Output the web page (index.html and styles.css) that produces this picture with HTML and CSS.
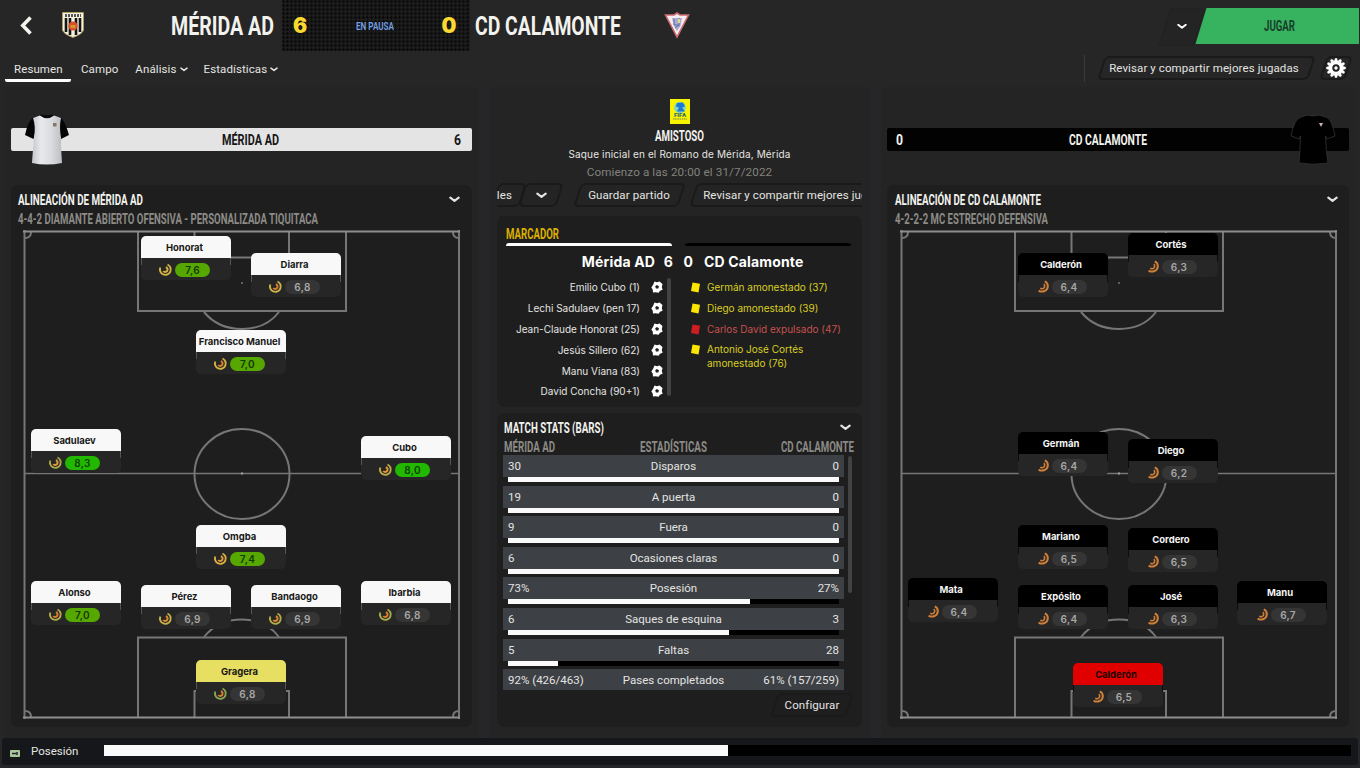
FILE: index.html
```html
<!DOCTYPE html>
<html lang="es">
<head>
<meta charset="utf-8">
<title>Mérida AD 6 - 0 CD Calamonte</title>
<link rel="stylesheet" href="styles.css">
</head>
<body>
<svg class="defs" width="0" height="0">
  <symbol id="chev" viewBox="0 0 10 6"><path d="M1.200 1.300 5 4.200 8.800 1.300" fill="none" stroke="currentColor" stroke-width="1.900" stroke-linecap="round" stroke-linejoin="round"/></symbol>
  <symbol id="pitch" viewBox="0 0 438 490">
    <g fill="none" stroke="#767676" stroke-width="2">
      <path d="M1.500 0V489M436 0V489"/>
      <path d="M115 2V81H323V2"/>
      <path d="M171.500 2V27.500H266V2"/>
      <path d="M181 82Q195 99 219 99T256 82" />
      <ellipse cx="219" cy="244" rx="47.500" ry="45"/>
      <path d="M1 243.500H437" stroke-width="1.500"/>
      <path d="M115 487V407.500H323V487"/>
      <path d="M171.500 487V461H266V487"/>
      <path d="M181 407Q195 389.500 219 389.500T256 407"/>
      <path d="M8 2Q8 8 2 8M430 2Q430 8 436 8M8 487Q8 481 2 481M430 487Q430 481 436 481"/>
    </g>
    <path d="M0 1.500H437M0 487.500H437" stroke="#8e8e8e" stroke-width="2"/>
    <circle cx="219" cy="53" r="1" fill="#767676"/><circle cx="219" cy="434" r="1" fill="#767676"/><circle cx="219" cy="243.500" r="1.200" fill="#999"/>
  </symbol>
  <symbol id="ball" viewBox="0 0 12 12"><path d="M3.500.600 6 1.200 8.600.600 11.500 3 10.800 6 11.600 8.700 9 9.700 7.600 11.800 4.500 11.200 2 11.500 1.700 8.500.300 6.500 2 4Z" fill="#fff"/><path d="M5.800 3.900 8 5.300 7.300 7.500H4.900L4.200 5.300Z" fill="#222"/></symbol>
  <symbol id="card" viewBox="0 0 11 11"><path d="M2.500.500 10 1.800 8.500 10.500 1 9Z" fill="currentColor"/></symbol>
</svg>

<header class="top">
  <svg class="back" width="12" height="19"><path d="M10.500 1.500 2.800 9.500 10.500 17.500" fill="none" stroke="#f4f4ee" stroke-width="3.600"/></svg>
  <svg class="crest" width="22" height="26" viewBox="0 0 22 26">
    <path d="M.500.500h21V18q-1 4-10.500 7.500Q1.500 22 .500 18Z" fill="#f4f0df" stroke="#a89a60"/>
    <path d="M4 6v14M8 6v17M14 6v17M18 6v14" stroke="#141414" stroke-width="2.600"/>
    <path d="M3 3.500h16" stroke="#555" stroke-width="3" stroke-dasharray="2 1"/>
    <circle cx="11" cy="14" r="4.600" fill="#de4a2c"/><path d="M8.500 14.500h5" stroke="#c99a28" stroke-width="3"/>
  </svg>
  <svg class="cond home-title" width="103" height="50"><text x="0" y="35" textLength="103" lengthAdjust="spacingAndGlyphs">MÉRIDA AD</text></svg>
  <div class="score">
    <span class="digit">6</span>
    <svg class="cond status" width="38" height="14"><text x="0" y="11" textLength="38" lengthAdjust="spacingAndGlyphs">EN PAUSA</text></svg>
    <span class="digit">0</span>
  </div>
  <svg class="cond away-title" width="146" height="50"><text x="0" y="35" textLength="146" lengthAdjust="spacingAndGlyphs">CD CALAMONTE</text></svg>
  <svg class="crest2" width="26" height="27" viewBox="0 0 26 27">
    <path d="M1.500 3H10L13 1l3 2h8.500L13 25Z" fill="#f3edf0" stroke="#c8696f" stroke-width="1.600"/>
    <path d="M8 6h10l-1.500 8-3.500 5-3-5Z" fill="#a9acd0"/><path d="M10 7v6h4M15 6v8M11 16l4-3" stroke="#5f6aa8" fill="none"/><path d="M14 7h2v4h-2z" fill="#e3d98a"/>
  </svg>
  <div class="play">
    <svg width="201" height="38">
      <path d="M13 1H47L35 37H1Z" fill="#242424" stroke="#202020"/>
      <path d="M48.500 0H201V36H37.500Z" fill="#37b25f"/>
      <use href="#chev" x="19" y="15.500" width="10" height="6"/>
      <text class="play-label" x="106" y="23" textLength="31" lengthAdjust="spacingAndGlyphs">JUGAR</text>
    </svg>
  </div>
</header>

<nav class="tabs">
  <a class="tab active">Resumen</a><a class="tab">Campo</a>
  <a class="tab">Análisis<svg width="8" height="5"><use href="#chev"/></svg></a>
  <a class="tab">Estadísticas<svg width="8" height="5"><use href="#chev"/></svg></a>
  <div class="tools">
    <span class="slant review"><b>Revisar y compartir mejores jugadas</b></span>
    <span class="slant gear"><svg width="20" height="20" viewBox="-10 -10 20 20"><g fill="#fff"><circle r="7.500"/><g id="tooth"><path d="M-1.800-7-1-9.800H1L1.800-7ZM-1.800 7-1 9.800H1L1.800 7Z"/></g><use href="#tooth" transform="rotate(30)"/><use href="#tooth" transform="rotate(60)"/><use href="#tooth" transform="rotate(90)"/><use href="#tooth" transform="rotate(120)"/><use href="#tooth" transform="rotate(150)"/></g><circle r="2.700" fill="#fff" stroke="#222" stroke-width="2"/></svg></span>
  </div>
</nav>

<main class="cols">
  <section class="side home">
    <div class="teambar">
      <svg class="shirt" width="46" height="52" viewBox="0 0 46 52">
        <defs><linearGradient id="cloth"><stop offset="0" stop-color="#c4c6ca"/><stop offset=".3" stop-color="#e8e9ec"/><stop offset=".65" stop-color="#dadbdf"/><stop offset="1" stop-color="#bcbec2"/></linearGradient></defs>
        <path d="M10 3Q4 6 1 21L9.500 25 14 8ZM36 3Q41 7 45 21L37 25 32 8Z" fill="#050505"/>
        <path d="M9 4 16 1.500Q23 5 30 1.500L37 4Q35 12 37 24 37 38 38 49 23 52 8 49 9 34 10 24 12 12 9 4Z" fill="url(#cloth)"/>
        <path d="M16 1.500Q23 7 30 1.500L28 .500Q23 2 17 .500Z" fill="#0a0a0a"/><path d="M29 9h3.500v3.500h-3.500z" fill="#8b7565"/>
      </svg>
      <svg class="cond name" width="57" height="23"><text x="0" y="17" textLength="57" lengthAdjust="spacingAndGlyphs">MÉRIDA AD</text></svg>
      <svg class="cond goals" width="7" height="23"><text x="0" y="17" textLength="7" lengthAdjust="spacingAndGlyphs">6</text></svg>
    </div>
    <article class="panel lineup">
      <div class="head"><svg class="cond" width="125" height="20"><text x="0" y="15" textLength="125" lengthAdjust="spacingAndGlyphs">ALINEACIÓN DE MÉRIDA AD</text></svg><svg class="chev" width="11" height="7"><use href="#chev"/></svg></div>
      <svg class="cond muted" width="300" height="19"><text x="0" y="14" textLength="300" lengthAdjust="spacingAndGlyphs">4-4-2 DIAMANTE ABIERTO OFENSIVA - PERSONALIZADA TIQUITACA</text></svg>
      <div class="field" id="home-field"><svg width="438" height="490"><use href="#pitch"/></svg></div>
    </article>
  </section>

  <section class="centre">
    <svg class="comp" width="20" height="25" viewBox="0 0 20 25">
      <rect width="20" height="25" fill="#f8f400"/><circle cx="10" cy="8.500" r="5.800" fill="#7fd0c8"/><path d="M7 4l6-.500 2 4-3 1 3 4H7l2-4-3-1Z" fill="#1779d4"/>
      <text x="4" y="18" textLength="12" lengthAdjust="spacingAndGlyphs">FIFA</text><path d="M3 20h14" stroke="#b5b834" stroke-width="2" stroke-dasharray="1.500 .700"/>
    </svg>
    <svg class="cond amistoso" width="49" height="20"><text x="0" y="15" textLength="49" lengthAdjust="spacingAndGlyphs">AMISTOSO</text></svg>
    <p class="venue">Saque inicial en el Romano de Mérida, Mérida</p>
    <p class="kick">Comienzo a las 20:00 el 31/7/2022</p>
    <div class="actions">
      <span class="slant les"><b>les</b></span><span class="slant drop"><svg width="11" height="7"><use href="#chev"/></svg></span>
      <span class="slant save"><b>Guardar partido</b></span>
      <span class="slant share"><b>Revisar y compartir mejores jugadas</b></span>
    </div>

    <article class="panel board">
      <svg class="cond gold" width="53" height="18"><text x="0" y="14" textLength="53" lengthAdjust="spacingAndGlyphs">MARCADOR</text></svg>
      <div class="caps"><i class="white"></i><i></i></div>
      <div class="result"><span>Mérida AD</span><span>6</span><span>0</span><span>CD Calamonte</span></div>
      <div class="events">
        <ul class="goals-list">
          <li>Emilio Cubo (1)<svg width="12" height="12"><use href="#ball"/></svg></li>
          <li>Lechi Sadulaev (pen 17)<svg width="12" height="12"><use href="#ball"/></svg></li>
          <li>Jean-Claude Honorat (25)<svg width="12" height="12"><use href="#ball"/></svg></li>
          <li>Jesús Sillero (62)<svg width="12" height="12"><use href="#ball"/></svg></li>
          <li>Manu Viana (83)<svg width="12" height="12"><use href="#ball"/></svg></li>
          <li>David Concha (90+1)<svg width="12" height="12"><use href="#ball"/></svg></li>
        </ul>
        <i class="scroll"></i>
        <ul class="cards-list">
          <li><svg width="11" height="11"><use href="#card"/></svg><span>Germán amonestado (37)</span></li>
          <li><svg width="11" height="11"><use href="#card"/></svg><span>Diego amonestado (39)</span></li>
          <li class="red"><svg width="11" height="11"><use href="#card"/></svg><span>Carlos David expulsado (47)</span></li>
          <li><svg width="11" height="11"><use href="#card"/></svg><span>Antonio José Cortés<br>amonestado (76)</span></li>
        </ul>
      </div>
    </article>

    <article class="panel stats">
      <div class="head"><svg class="cond" width="100" height="20"><text x="0" y="15" textLength="100" lengthAdjust="spacingAndGlyphs">MATCH STATS (BARS)</text></svg><svg class="chev" width="11" height="7"><use href="#chev"/></svg></div>
      <div class="thead">
        <svg class="cond muted" width="51" height="20"><text x="0" y="14.500" textLength="51" lengthAdjust="spacingAndGlyphs">MÉRIDA AD</text></svg>
        <svg class="cond muted mid" width="67" height="20"><text x="0" y="14.500" textLength="67" lengthAdjust="spacingAndGlyphs">ESTADÍSTICAS</text></svg>
        <svg class="cond muted" width="73" height="20"><text x="0" y="14.500" textLength="73" lengthAdjust="spacingAndGlyphs">CD CALAMONTE</text></svg>
      </div>
      <div class="tbody"><div class="rows" id="rows"></div><i class="scroll"></i></div>
      <div class="foot"><span class="slant config"><b>Configurar</b></span></div>
    </article>
  </section>

  <section class="side away">
    <div class="teambar">
      <svg class="cond goals" width="7" height="23"><text x="0" y="17" textLength="7" lengthAdjust="spacingAndGlyphs">0</text></svg>
      <svg class="cond name" width="78" height="23"><text x="0" y="17" textLength="78" lengthAdjust="spacingAndGlyphs">CD CALAMONTE</text></svg>
      <svg class="shirt" width="46" height="52" viewBox="0 0 46 52">
        <path d="M10 3.500 17 1Q23 3 29 1L37 3.500Q42 6 45 22L37 25 35.500 22Q36 38 38 49 23 51.500 9 49 10 38 10.500 22L9 25 1 22Q4 6 10 3.500Z" fill="#000" stroke="#333" stroke-width=".8"/>
        <path d="M29 9h4l-2 4Z" fill="#c9b4bc"/>
      </svg>
    </div>
    <article class="panel lineup">
      <div class="head"><svg class="cond" width="146" height="20"><text x="0" y="15" textLength="146" lengthAdjust="spacingAndGlyphs">ALINEACIÓN DE CD CALAMONTE</text></svg><svg class="chev" width="11" height="7"><use href="#chev"/></svg></div>
      <svg class="cond muted" width="153" height="19"><text x="0" y="14" textLength="153" lengthAdjust="spacingAndGlyphs">4-2-2-2 MC ESTRECHO DEFENSIVA</text></svg>
      <div class="field" id="away-field"><svg width="438" height="490"><use href="#pitch"/></svg></div>
    </article>
  </section>
</main>

<footer class="possession">
  <svg width="10" height="7"><rect width="10" height="7" rx="1" fill="#a9c79a"/><path d="M2 3.500h4M7 2v3" stroke="#223" stroke-width="1.600"/></svg>
  <span>Posesión</span>
  <div class="track"><i></i></div>
</footer>
<script src="app.js"></script>
</body>
</html>
```
FILE: styles.css
```css
* { box-sizing: border-box; }
body { margin: 0; width: 1360px; height: 768px; overflow: hidden; background: #262628; color: #e4e4e2; font: 11.500px/16px Roboto, sans-serif; display: flex; flex-direction: column; }
svg { display: block; flex: none; overflow: visible; }
p, ul { margin: 0; padding: 0; list-style: none; }
b { font-weight: 400; }
.defs { position: absolute; }
.cond { font: 700 14px Roboto, sans-serif; fill: #f2f2ee; }
.muted { fill: #8c8b86; }

.top { display: flex; height: 52px; background: #262626; }
.back { margin: 16px 0 0 20px; }
.crest { margin: 12px 0 0 30px; }
.home-title, .away-title { font-size: 25.500px; font-weight: 700; }
.home-title { margin-left: 87px; }
.score { display: flex; justify-content: space-between; align-items: center; width: 188px; height: 51px; margin-left: 8px; padding: 0 13px 0 10px; background: radial-gradient(circle at 1.500px 1.500px, #0a0a0a 1px, transparent 1.300px) 0 0 / 4px 4px, #1b1b1b; }
.digit { width: 16px; text-align: center; font: 900 21px/50px Inter, sans-serif; color: #fbd930; }
.status { font-size: 11.500px; font-weight: 600; fill: #71a0e6; margin-left: 22px; }
.score .digit:last-child { margin-left: 22px; }
.away-title { margin-left: 5px; }
.crest2 { margin: 12px 0 0 43px; }
.play { margin: 8px 0 0 auto; color: #fff; }
.play svg { margin-right: 1px; }
.play-label { font: 700 14px Roboto, sans-serif; fill: #16402a; }

.tabs { display: flex; height: 35px; background: #262626; padding-left: 5px; }
.tab { display: flex; align-items: center; gap: 3px; height: 30px; padding: 4px 8px 0; letter-spacing: .1px; white-space: nowrap; }
.tab.active { width: 66px; padding: 7px 0 0 9px; border-bottom: 3px solid #fff; border-radius: 2px; }
.active + .tab { padding-left: 10px; padding-right: 9px; }
.tools { display: flex; gap: 3px; margin: 3px 7px 0 auto; padding-left: 12px; border-left: 1px solid #3a3a3a; height: 27px; }
.slant { position: relative; flex: none; display: flex; align-items: center; justify-content: center; height: 24px; white-space: nowrap; letter-spacing: .1px; z-index: 0; }
.slant::before { content: ""; position: absolute; inset: 0 4px; border: 2px solid #1a1a1a; border-radius: 5px; transform: skewX(-18deg); z-index: -1; }
.review { width: 219px; margin-top: 1px; padding-right: 5px; }
.gear { width: 34px; margin-top: 1px; }

.cols { display: flex; height: 651px; padding: 0 4px; gap: 11px; }
.side, .centre { background: #242424; }
.side { width: 475px; padding: 41px 7px 0; }
.side.away { padding-left: 6px; padding-right: 7px; }
.centre { width: 381px; padding: 12px 8px 0; margin-left: -1px; display: flex; flex-direction: column; align-items: center; }
.teambar { position: relative; height: 23px; width: 461px; border-radius: 2px; display: flex; background: #e4e4e4; }
.home .cond.name { margin-left: 211px; }
.home .teambar .cond { fill: #171717; }
.home .goals { margin-left: auto; margin-right: 11px; }
.away .teambar { background: #020202; width: 462px; }
.away .goals { margin-left: 9px; }
.away .name { margin-left: 166px; }
.shirt { position: absolute; top: -14px; }
.home .shirt { left: 13px; }
.away .shirt { right: 13px; }
.panel { background: #1e1e1e; border-radius: 7px; }
.lineup { width: 461px; height: 542px; margin-top: 34px; padding: 5px 12px 0 7px; }
.away .lineup { width: 462px; padding: 5px 11px 0 8px; }
.head { display: flex; justify-content: space-between; align-items: center; height: 20px; }
.head .chev { margin-bottom: 1px; }
.field { position: relative; width: 438px; height: 490px; margin: 1px 0 0 5px; }

.player { position: absolute; width: 90px; height: 44px; background: #262626; border-radius: 5px; }
.player .nm { height: 22px; border-radius: 5px 5px 0 0; background: #f8f8f8; color: #181818; font: 700 9.500px/23px Inter, sans-serif; letter-spacing: -.05px; text-align: center; padding-right: 3px; white-space: nowrap; }
.player::before, .player::after { content: ""; position: absolute; top: 22px; width: 1px; height: 7px; background: #555; }
.player::before { left: 0; } .player::after { right: 0; }
.black { margin-left: -.500px; }
.black .nm { background: #000; color: #f5f5f5; }
.black::before, .black::after { background: #0c0c0c; }
.yellow .nm { background: #e6df62; }
.red-card .nm { background: #e00000; color: #1c0000; }
.player .rt { display: flex; align-items: center; gap: 3px; height: 22px; padding: 1px 0 0 18px; }
.pill { width: 35px; height: 14px; border-radius: 7px; background: #353535; color: #a8a8a8; font: 600 10px/14px Inter, sans-serif; letter-spacing: .3px; text-align: center; }
.pill.good { background: #56a800; color: #143700; }
.pill.great { background: #22b800; color: #0c4000; }

.comp text { font: 700 6px Roboto, sans-serif; fill: #155f7a; }
.amistoso { margin-top: 2px; }
.venue { font: 10px/16px Inter, sans-serif; letter-spacing: .14px; height: 17px; }
.kick { font-size: 11.700px; letter-spacing: .1px; line-height: 18px; color: #82827d; }
.actions { display: flex; width: 365px; height: 24px; margin-top: 2px; overflow: hidden; }
.les { width: 36px; margin-left: -6px; padding-right: 15px; justify-content: flex-end; }
.drop { width: 46px; margin-left: -9px; padding-right: 0; }
.save { width: 113px; margin-left: 9px; padding-right: 1px; }
.share { width: 217px; margin-left: 3px; padding-left: 1px; }
.board { width: 365px; height: 191px; margin-top: 9px; padding: 9px 9px 0; }
.gold { fill: #dcb000; }
.caps { display: flex; gap: 13px; height: 3px; }
.caps i { width: 166px; height: 3px; background: #000; border-radius: 6px 6px 0 0; }
.caps .white { background: #fff; }
.result { display: grid; grid-template-columns: 149px 18px 20px 1fr; height: 29px; font: 700 14px/31px Inter, sans-serif; letter-spacing: .15px; color: #fff; }
.result span:nth-child(-n+3) { text-align: right; }
.result span:last-child { padding-left: 11px; }
.events { display: flex; font: 10px/14px Inter, sans-serif; }
.goals-list { width: 157px; padding-top: 2px; }
.goals-list li { display: flex; justify-content: flex-end; align-items: center; gap: 11px; height: 20.800px; }
.events .scroll { width: 4px; height: 118px; margin: 3px 19px 0 4px; background: #414244; border-radius: 2px; }
.cards-list { color: #d9ce22; padding-top: 1px; }
.cards-list li { display: flex; gap: 6px; min-height: 20.800px; line-height: 14px; padding-top: 4px; white-space: nowrap; }
.cards-list svg { color: #fbe600; margin-top: 2px; }
.cards-list .red { color: #c5504e; }
.cards-list .red svg { color: #d21d20; }

.stats { width: 365px; height: 314px; margin-top: 6px; padding: 5px 8px 0 6px; }
.stats .head { padding: 0 3px 0 1px; }
.thead { display: flex; justify-content: space-between; height: 17px; padding-left: 1px; margin-top: -1px; }
.mid { margin-left: 11px; }
.tbody { display: flex; gap: 4px; height: 235px; margin-top: 1px; overflow: hidden; }
.tbody .scroll { width: 4px; height: 137px; margin-top: 1px; background: #414244; border-radius: 2px; }
.rows { width: 341px; }
.row { height: 30.600px; }
.row .vals { display: grid; grid-template-columns: 1fr 1fr 1fr; height: 22px; padding: 0 5px; background: #3d4045; font-size: 11.500px; line-height: 23px; white-space: nowrap; }
.vals span:nth-child(2) { text-align: center; }
.vals span:nth-child(3) { text-align: right; }
.bar { height: 5px; margin: 0 5px; background: #000; }
.bar i { display: block; height: 5px; background: #fafafa; }
.foot { display: flex; justify-content: flex-end; padding-top: 3px; }
.config { width: 84px; }

.possession { display: flex; align-items: center; height: 27px; margin: 0 2px; padding: 0 7px 0 8px; background: #15171a; border-radius: 3px; }
.possession svg { margin-top: 3px; }
.possession span { width: 73px; margin: -1px 0 0 11px; }
.track { flex: 1; height: 11px; margin-top: -2px; background: #000; }
.track i { display: block; width: 624px; height: 11px; background: #fafafa; }
```
FILE: app.js
```js
const home = [
  ["Honorat", "7,6", 118, 6, "#d6b442", "#d6b442"],
  ["Diarra", "6,8", 228, 23, "#c9b648", "#dc7d32"],
  ["Francisco Manuel", "7,0", 173, 100, "#d2b442", "#dc7d32"],
  ["Sadulaev", "8,3", 8, 199, "#a8a848", "#e09a3c"],
  ["Cubo", "8,0", 338, 206, "#bfae48", "#e09a3c"],
  ["Omgba", "7,4", 173, 295, "#dcb040", "#e09a3c"],
  ["Alonso", "7,0", 8, 351, "#b4ac48", "#dc7d32"],
  ["Pérez", "6,9", 118, 355, "#c8b048", "#dc8a32"],
  ["Bandaogo", "6,9", 228, 355, "#b4ac48", "#dc8a32"],
  ["Ibarbia", "6,8", 338, 351, "#a8b04c", "#dc7d32"],
  ["Gragera", "6,8", 173, 430, "#86a850", "#dc7d32", "yellow"]
];
const away = [
  ["Calderón", "6,4", 118, 23], ["Cortés", "6,3", 228, 3],
  ["Germán", "6,4", 118, 202], ["Diego", "6,2", 228, 209],
  ["Mariano", "6,5", 118, 295], ["Cordero", "6,5", 228, 298],
  ["Mata", "6,4", 8, 348], ["Expósito", "6,4", 118, 355],
  ["José", "6,3", 228, 355], ["Manu", "6,7", 337, 351],
  ["Calderón", "6,5", 173, 433, null, null, "red-card"]
];
const ring = (outer, inner) => outer
  ? `<svg width="13" height="13" viewBox="0 0 13 13" fill="none" stroke-width="1.900"><path d="M8.500 1.500A5.400 5.400 0 1 1 1.300 4.500" stroke="${outer}"/><path d="M6.800 4.200A2.400 2.400 0 1 1 4.300 8" stroke="${inner}" stroke-width="2"/></svg>`
  : `<svg width="13" height="13" viewBox="0 0 13 13" fill="none" stroke="#cf7f38"><path d="M8.800 1.300A5.300 5.300 0 0 1 8.500 11Q5.500 12.400 2.600 10.600" stroke-width="2"/><path d="M7.800 4.200A2.600 2.600 0 0 1 7 8.600Q5.600 9 4.300 8.300" stroke-width="1.600"/></svg>`;

function place(id, list, base) {
  const field = document.getElementById(id);
  for (const [name, rating, x, y, outer, inner, mark] of list) {
    const v = parseFloat(rating.replace(",", "."));
    const el = document.createElement("div");
    el.className = `player ${base} ${mark || ""}`;
    el.style.left = x + "px";
    el.style.top = y + "px";
    el.innerHTML = `<div class="nm">${name}</div><div class="rt">${ring(outer, inner)}<span class="pill ${v >= 8 ? "great" : v >= 7 ? "good" : ""}">${rating}</span></div>`;
    field.append(el);
  }
}
place("home-field", home, "white");
place("away-field", away, "black");

const stats = [
  ["30", "Disparos", "0", 100], ["19", "A puerta", "0", 100], ["9", "Fuera", "0", 100],
  ["6", "Ocasiones claras", "0", 100], ["73%", "Posesión", "27%", 73],
  ["6", "Saques de esquina", "3", 66.7], ["5", "Faltas", "28", 15.2],
  ["92% (426/463)", "Pases completados", "61% (157/259)", 0]
];
document.getElementById("rows").innerHTML = stats.map(([a, label, b, share]) =>
  `<div class="row"><div class="vals"><span>${a}</span><span>${label}</span><span>${b}</span></div><div class="bar"><i style="width:${share}%"></i></div></div>`).join("");
```
